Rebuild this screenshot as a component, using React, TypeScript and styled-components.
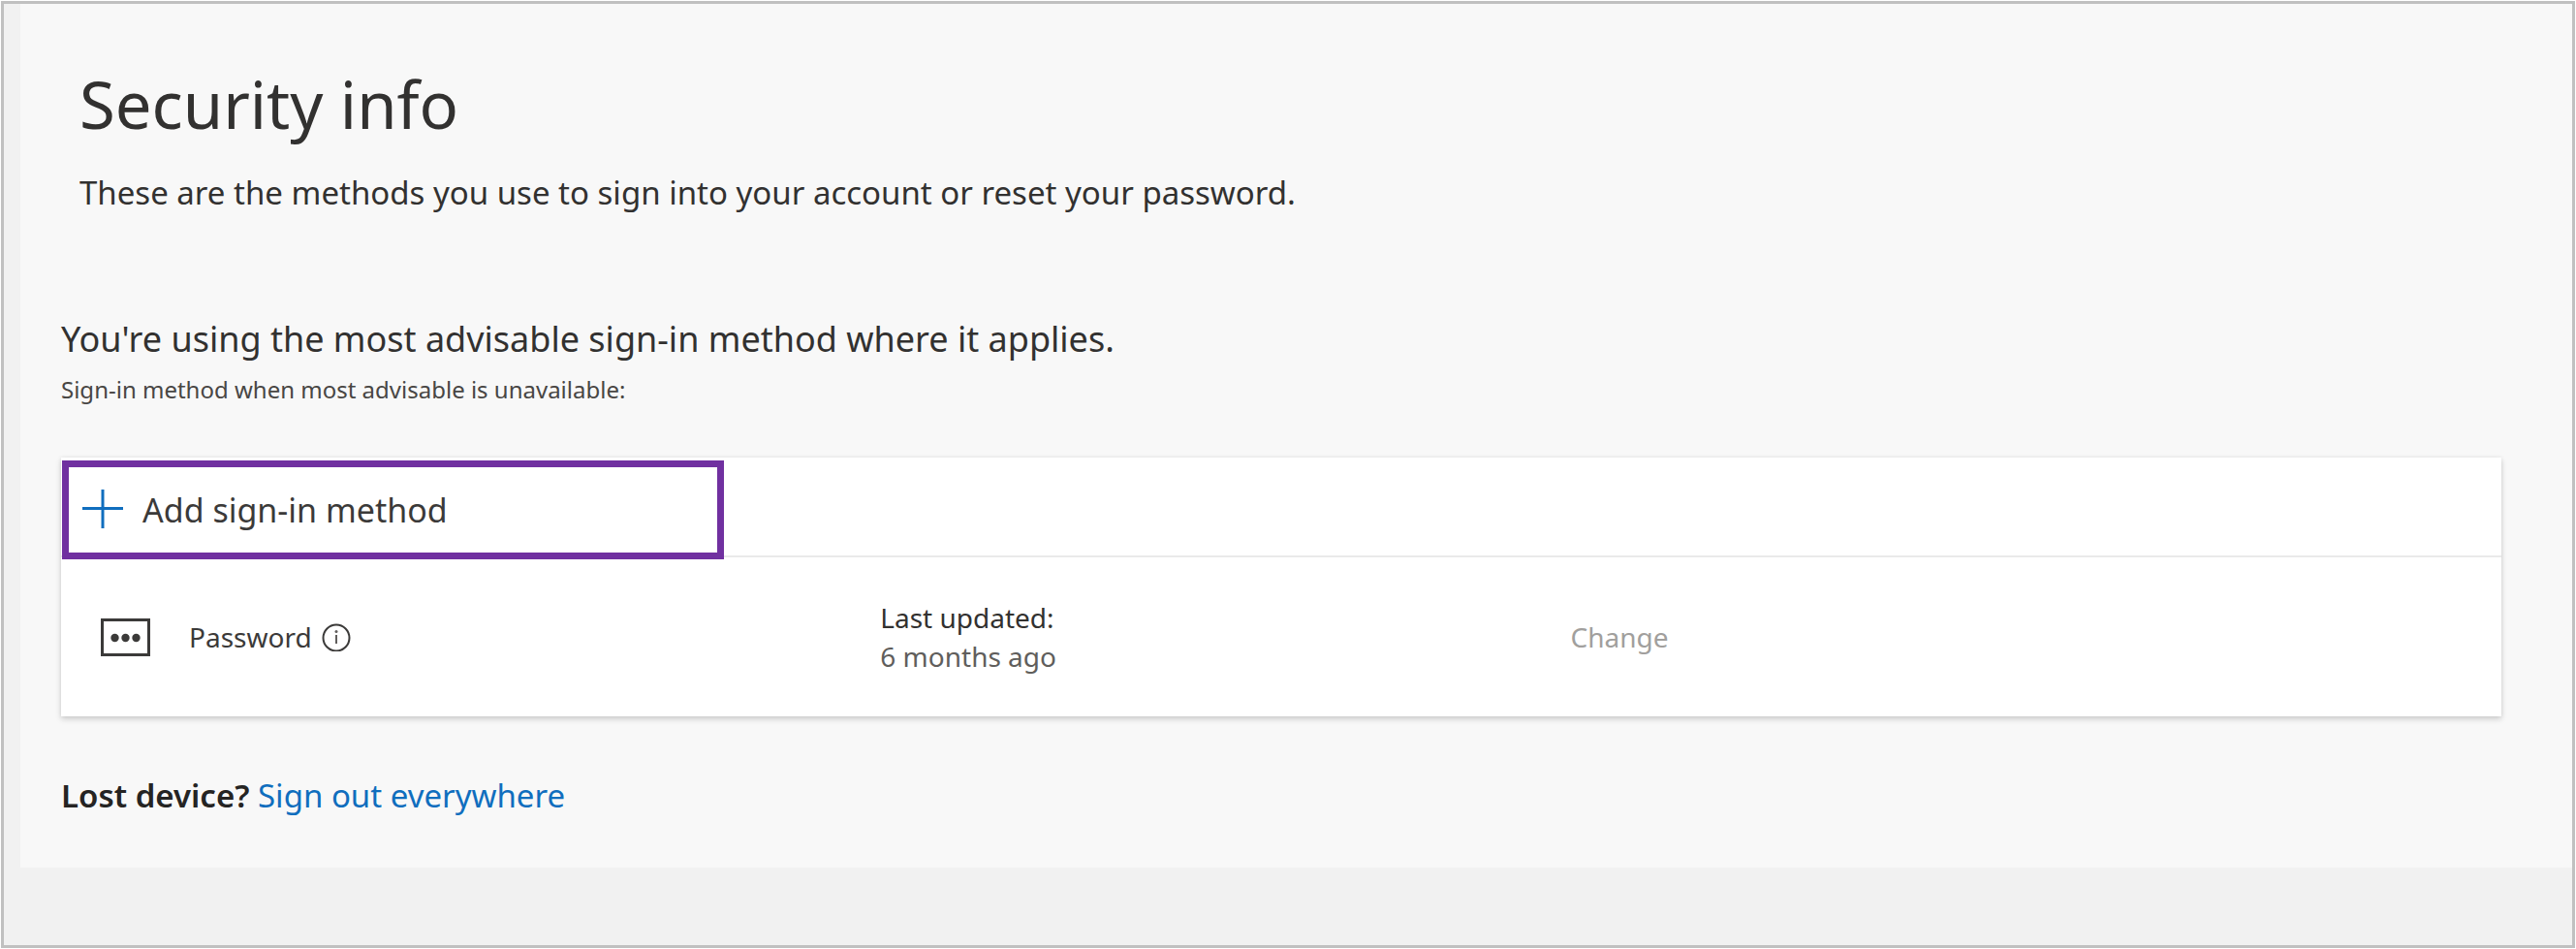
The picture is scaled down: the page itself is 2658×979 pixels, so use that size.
import React from 'react';
import styled, { createGlobalStyle } from 'styled-components';

const GlobalStyle = createGlobalStyle`
  * { box-sizing: border-box; }
  body {
    margin: 0;
    padding: 1px;
    background: #fff;
    color: #323130;
    font-family: 'Segoe UI', 'Noto Sans', 'Open Sans', sans-serif;
  }
`;

const Frame = styled.div`
  display: flex;
  flex-direction: column;
  min-height: calc(100vh - 2px);
  padding-left: 17px;
  border: 3px solid #c0c0c0;
  background: #f1f1f1;
`;

const Panel = styled.main`
  padding: 57px 73px 50px 42px;
  background: #f8f8f8;
`;

const PageHeader = styled.header`
  display: flex;
  flex-direction: column;
  gap: 22px;
  padding-left: 19px;
  margin-bottom: 103px;
`;

const Title = styled.h1`
  margin: 0;
  font-size: 67px;
  font-weight: 400;
  line-height: 92px;
`;

const BodyText = styled.p`
  margin: 0;
  font-size: 33px;
  line-height: 48px;
`;

const Subtitle = styled.h2`
  margin: 0 0 10px;
  font-size: 36px;
  font-weight: 400;
  line-height: 48px;
`;

const Hint = styled.p`
  margin: 0 0 52px;
  color: #484644;
  font-size: 24px;
  line-height: 36px;
`;

const Card = styled.section`
  margin-bottom: 58px;
  background: #fff;
  box-shadow: 0 3px 6px rgba(0, 0, 0, 0.16), 0 0 4px rgba(0, 0, 0, 0.08);
`;

const CommandBar = styled.div`
  display: flex;
  align-items: flex-start;
  height: 103px;
  padding: 3px 0 0 1px;
  border-bottom: 2px solid #eaeaea;
`;

const AddButton = styled.button`
  display: flex;
  flex: none;
  align-items: center;
  gap: 20px;
  width: 683px;
  height: 102px;
  padding: 0 14px;
  border: 7px solid #7030a0;
  background: #fff;
  color: #3b3a39;
  font-family: inherit;
  font-size: 34px;
  line-height: 48px;
  text-align: left;
`;

const MethodList = styled.ul`
  margin: 0;
  padding: 0;
  list-style: none;
`;

const MethodRow = styled.li`
  display: grid;
  grid-template-columns: 132px 713fr 712fr 960fr;
  align-items: center;
  height: 164px;
  font-size: 28px;
  line-height: 40px;
`;

const IconCell = styled.div`
  display: flex;
  padding-left: 41px;
`;

const MethodName = styled.div`
  display: flex;
  align-items: center;
  gap: 10px;
  color: #3b3a39;
`;

const Details = styled.dl`
  margin: 0;
`;

const DetailLabel = styled.dt``;

const DetailValue = styled.dd`
  margin: 0;
  color: #605e5c;
`;

const ChangeButton = styled.button`
  justify-self: start;
  padding: 0;
  border: 0;
  background: none;
  color: #a19f9d;
  font: inherit;
`;

const Question = styled.strong`
  color: #252423;
  font-weight: 600;
`;

const SignOutLink = styled.a`
  color: #106ebe;
  text-decoration: none;
`;

const Icon = styled.svg`
  display: block;
  flex: none;
`;

const PlusIcon = () => (
  <Icon width="42" height="42" viewBox="0 0 42 42" aria-hidden="true">
    <path d="M21 0v40M0 19.5h42" stroke="#106ebe" strokeWidth="3" />
  </Icon>
);

const PasswordIcon = () => (
  <Icon width="51" height="39" viewBox="0 0 51 39" aria-hidden="true">
    <rect x="1.5" y="1.5" width="48" height="36" fill="none" stroke="#3b3a39" strokeWidth="3" />
    <g fill="#3b3a39">
      <circle cx="14.5" cy="20" r="4.2" />
      <circle cx="25.5" cy="20" r="4.2" />
      <circle cx="36.5" cy="20" r="4.2" />
    </g>
  </Icon>
);

const InfoIcon = () => (
  <Icon width="30" height="30" viewBox="0 0 30 30" aria-hidden="true">
    <circle cx="15" cy="16" r="13.5" fill="none" stroke="#3b3a39" strokeWidth="2" />
    <path d="M15 13v9" stroke="#605e5c" strokeWidth="2" />
    <circle cx="15" cy="9.5" r="1.5" fill="#605e5c" />
  </Icon>
);

export default function App() {
  return (
    <>
      <GlobalStyle />
      <Frame>
        <Panel>
          <PageHeader>
            <Title>Security info</Title>
            <BodyText>These are the methods you use to sign into your account or reset your password.</BodyText>
          </PageHeader>
          <Subtitle>You're using the most advisable sign-in method where it applies.</Subtitle>
          <Hint>Sign-in method when most advisable is unavailable:</Hint>
          <Card>
            <CommandBar>
              <AddButton type="button">
                <PlusIcon />
                Add sign-in method
              </AddButton>
            </CommandBar>
            <MethodList>
              <MethodRow>
                <IconCell>
                  <PasswordIcon />
                </IconCell>
                <MethodName>
                  Password
                  <InfoIcon />
                </MethodName>
                <Details>
                  <DetailLabel>Last updated:</DetailLabel>
                  <DetailValue>6 months ago</DetailValue>
                </Details>
                <ChangeButton type="button">Change</ChangeButton>
              </MethodRow>
            </MethodList>
          </Card>
          <BodyText>
            <Question>Lost device?</Question> <SignOutLink href="#sign-out">Sign out everywhere</SignOutLink>
          </BodyText>
        </Panel>
      </Frame>
    </>
  );
}
